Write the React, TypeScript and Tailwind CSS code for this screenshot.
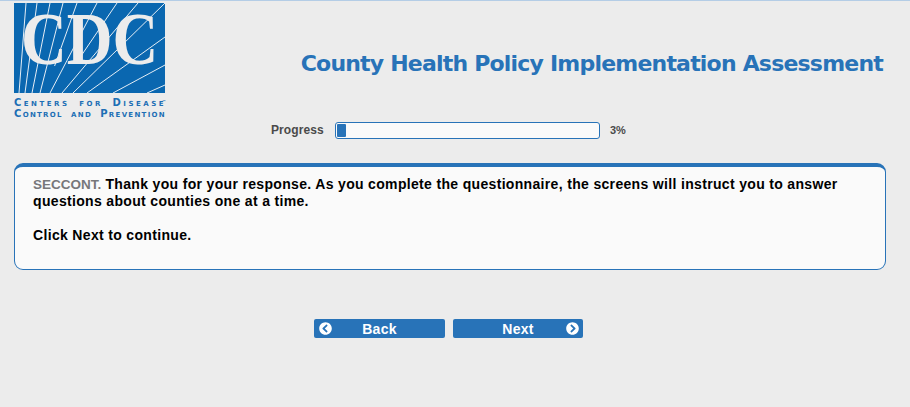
import { FaChevronCircleLeft, FaChevronCircleRight } from 'react-icons/fa';

// start of each ray, then where it leaves the box
const rays = [
  [19, 93, 26, 3],
  [25, 93, 37, 3],
  [32, 93, 50, 3],
  [40, 93, 63, 3],
  [54.6, 66, 77, 3],
  [50, 93, 97, 3],
  [75.6, 64, 117, 3],
  [62, 93, 138, 3],
  [73, 93, 165, 3],
  [87, 93, 165, 37],
  [113, 93, 165, 65],
  [147, 93, 165, 85],
];

const Logo = () => (
  <div className="w-[151px] shrink-0">
    <svg width="151" height="90" viewBox="14 3 151 90" className="block">
      <rect x="14" y="3" width="151" height="90" fill="#0a67b0" />
      {rays.map(([x1, y1, x2, y2]) => (
        <line key={x2 + '-' + y2} x1={x1} y1={y1} x2={x2} y2={y2} stroke="#e4edf5" strokeWidth="1" />
      ))}
      <text
        transform="translate(21 64) scale(0.856 1)"
        fontFamily="'Liberation Serif', serif"
        fontWeight="700"
        fontSize="74"
        fill="#ececec"
      >
        CDC
      </text>
    </svg>
    <div className="mt-[4px] text-[#1d6fb5] font-['DejaVu_Sans',sans-serif] font-bold text-[10px] leading-[11px] [font-variant:small-caps]">
      <div className="flex justify-between tracking-[2.5px] -mr-[1px]">
        <span>Centers</span>
        <span>for</span>
        <span className="relative">
          Disease
          <span className="absolute right-0 -top-[1px] text-[4px] tracking-normal">™</span>
        </span>
      </div>
      <div className="flex justify-between tracking-[1.3px] -mr-[1px]">
        <span>Control</span>
        <span>and</span>
        <span>Prevention</span>
      </div>
    </div>
  </div>
);

const NavButton = ({ label, dir }: { label: string; dir: 'back' | 'next' }) => (
  <button
    className={
      dir === 'back'
        ? 'relative w-[131px] h-[19px] rounded-[2px] bg-[#2873b8] text-white text-[14px] tracking-[0.3px] font-bold leading-[21px] text-center'
        : 'relative w-[130px] h-[19px] rounded-[2px] bg-[#2873b8] text-white text-[14px] tracking-[0.3px] font-bold leading-[21px] text-center'
    }
  >
    {dir === 'back' ? (
      <FaChevronCircleLeft className="absolute left-[5px] top-[3px] w-[13px] h-[13px]" />
    ) : (
      <FaChevronCircleRight className="absolute right-[4px] top-[3px] w-[13px] h-[13px]" />
    )}
    {label}
  </button>
);

export default function App() {
  return (
    <div className="h-[407px] overflow-hidden bg-[#ececec] border-t border-[#b4cde6] font-['Liberation_Sans',sans-serif]">
      <div className="flex pl-[14px] pr-[27px] pt-[2px]">
        <Logo />
        <h1 className="ml-auto mt-[46px] h-[30px] font-['DejaVu_Sans',sans-serif] font-bold text-[22px] tracking-[-0.8px] leading-[30px] text-[#2873b8] whitespace-nowrap">
          County Health Policy Implementation Assessment
        </h1>
      </div>

      <div className="flex items-center mt-[2px] pl-[271px]">
        <span className="w-[64px] text-[12px] tracking-[0.1px] font-bold text-[#4a4a4a]">Progress</span>
        <div className="w-[265px] h-[17px] p-[1px] rounded-[3px] border border-[#2873b8] bg-[#fafafa]">
          <div className="w-[9px] h-full rounded-[1px] bg-[#2873b8]" />
        </div>
        <span className="ml-[10px] text-[11px] font-bold text-[#4a4a4a]">3%</span>
      </div>

      <div className="ml-[14px] mr-[24px] mt-[24px] h-[107px] pl-[18px] pr-[40px] pt-[9px] rounded-[9px] border border-t-4 border-[#2873b8] bg-[#fafafa] text-[14px] tracking-[0.33px] leading-[17px] font-bold text-black">
        <p>
          <span className="text-[#77777a] text-[13.5px] tracking-normal">SECCONT.</span> Thank you for your response. As
          you complete the questionnaire, the screens will instruct you to answer questions about counties one at a time.
        </p>
        <p className="mt-[17px]">Click Next to continue.</p>
      </div>

      <div className="flex gap-[8px] mt-[49px] pl-[314px]">
        <NavButton label="Back" dir="back" />
        <NavButton label="Next" dir="next" />
      </div>
    </div>
  );
}
